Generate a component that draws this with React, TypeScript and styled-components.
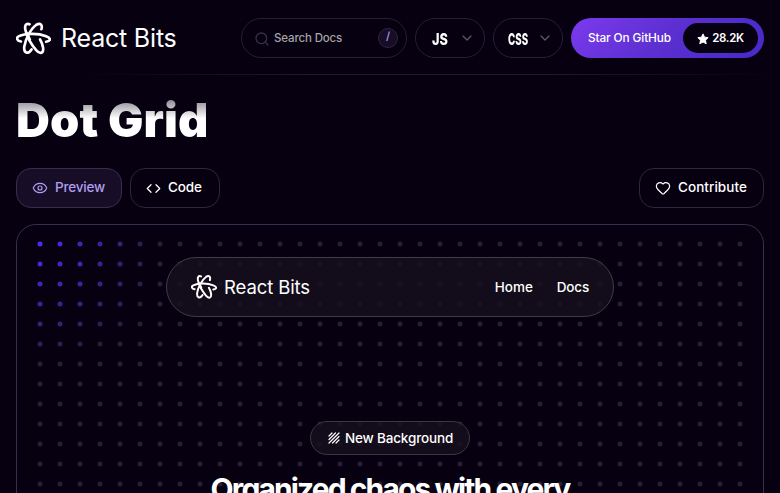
import React from "react";
import styled, { createGlobalStyle } from "styled-components";
import { ChevronDown, Code, Eye, Heart, Search } from "lucide-react";

const Global = createGlobalStyle`
  * { box-sizing: border-box; }
  html, body { margin: 0; height: 100%; overflow: hidden; background: #060010; }
  body { font-family: Inter, "Liberation Sans", sans-serif; color: #fff; }
`;

const Page = styled.div`
  height: 493px;
  overflow: hidden;
  display: flex;
  flex-direction: column;
`;

const Header = styled.header`
  height: 75px;
  flex: none;
  padding: 2px 16px 0;
  display: flex;
  align-items: center;
  gap: 8px;
  border-bottom: 1px solid;
  border-image: linear-gradient(90deg, #060010 10%, #211a2b 40%, #211a2b 70%, #060010) 1;
`;

const Label = styled.span<{ $size: number; $weight?: number; $spacing?: number; $color?: string }>`
  font-size: ${(p) => p.$size}px;
  font-weight: ${(p) => p.$weight ?? 500};
  letter-spacing: ${(p) => p.$spacing ?? 0}px;
  color: ${(p) => p.$color ?? "#fff"};
  line-height: 1.2;
  white-space: nowrap;
`;

const Brand = styled.div<{ $gap: number }>`
  display: flex;
  align-items: center;
  gap: ${(p) => p.$gap}px;
  margin-right: auto;
`;

const Pill = styled.div<{ $width: number; $pad: string }>`
  width: ${(p) => p.$width}px;
  height: 40px;
  padding: ${(p) => p.$pad};
  display: flex;
  align-items: center;
  justify-content: space-between;
  border: 1px solid #271e37;
  border-radius: 20px;
`;

const SearchText = styled.div`
  display: flex;
  align-items: center;
  gap: 4px;
  padding-top: 1px;
`;

const Key = styled.kbd`
  width: 20px;
  height: 20px;
  display: grid;
  place-items: center;
  padding-bottom: 4px;
  border: 1px solid #2f2542;
  border-radius: 50%;
  background: #170d27;
  color: #b19eef;
  font: 500 11px Inter, sans-serif;
`;

const Condensed = styled.span<{ $scale: number; $width: number }>`
  width: ${(p) => p.$width}px;
  padding-top: 1px;
  font-size: 16.5px;
  font-weight: 800;
  line-height: 20px;
  transform: scaleX(${(p) => p.$scale});
  transform-origin: left center;
`;

const StarButton = styled.button`
  width: 193px;
  height: 40px;
  padding: 0 6px 0 17px;
  display: flex;
  align-items: center;
  justify-content: space-between;
  border: 0;
  border-radius: 20px;
  background: linear-gradient(135deg, #7c3aed 0%, #5b2fd0 50%, #4729c8 100%);
  font-family: inherit;
`;

const Count = styled.span`
  width: 75px;
  height: 30px;
  padding-top: 1px;
  display: flex;
  align-items: center;
  justify-content: center;
  gap: 3px;
  border-radius: 15px;
  background: #060010;
`;

const Main = styled.main`
  padding: 16px 16px 0;
`;

const Title = styled.h1`
  margin: 0;
  height: 61px;
  font: 900 47px/57px Inter, sans-serif;
  letter-spacing: 0.1px;
  width: max-content;
  background: linear-gradient(180deg, #8c8992 14%, #fff 45%);
  background-clip: text;
  -webkit-background-clip: text;
  color: transparent;
`;

const Toolbar = styled.div`
  margin-top: 16px;
  display: flex;
  gap: 8px;
`;

const Tab = styled.button<{ $width: number; $active?: boolean; $end?: boolean }>`
  width: ${(p) => p.$width}px;
  height: 40px;
  padding: 0 0 1px 15px;
  display: flex;
  align-items: center;
  gap: 7px;
  margin-left: ${(p) => (p.$end ? "auto" : "0")};
  border: 1px solid ${(p) => (p.$active ? "#392e4e" : "#302541")};
  border-radius: 15px;
  background: ${(p) => (p.$active ? "#170d27" : "#060010")};
  color: ${(p) => (p.$active ? "#b19eef" : "#fff")};
  font-family: inherit;
  svg { margin-top: 1px; flex: none; }
`;

const Preview = styled.section`
  position: relative;
  height: 520px;
  margin-top: 16px;
  padding-top: 32px;
  display: flex;
  flex-direction: column;
  align-items: center;
  overflow: hidden;
  border: 1px solid #392e4e;
  border-radius: 20px;
`;

const DotCanvas = styled.svg`
  position: absolute;
  inset: 0;
`;

const Nav = styled.nav`
  position: relative;
  width: 448px;
  height: 60px;
  flex: none;
  padding: 0 24px;
  display: flex;
  align-items: center;
  gap: 24px;
  border: 1px solid #413b49;
  border-radius: 30px;
  background: rgba(22, 15, 29, 0.86);
`;

const Badge = styled.div`
  position: relative;
  width: 160px;
  height: 34px;
  flex: none;
  margin-top: 104px;
  padding-left: 1px;
  display: flex;
  align-items: center;
  justify-content: center;
  gap: 5px;
  border: 1px solid #3b3545;
  border-radius: 17px;
  background: rgba(22, 15, 29, 0.82);
`;

const Headline = styled.h2`
  position: relative;
  margin: 15px 0 0;
  text-align: center;
  font: 700 30px/38px Inter, sans-serif;
  letter-spacing: -1.9px;
  white-space: nowrap;
`;

const Logo = ({ width, height }: { width: number; height: number }) => (
  <svg width={width} height={height} viewBox="18 24 106 98" fill="none" stroke="#fff" strokeWidth="8" strokeLinecap="round">
    <path d="M33 82C21 80 17 71 27 66C45 57 85 56 109 66C124 72 125 80 109 83" />
    <path d="M59 30C48 25 43 34 47 49C52 69 66 93 79 108C91 122 102 118 100 101C99 93 95 83 91 76" />
    <path d="M95 45C99 31 92 24 79 32C62 44 46 76 43 98C41 118 54 122 65 106" />
    <path d="M50 56L60 76" />
  </svg>
);

const Star = () => (
  <svg width="12" height="12" viewBox="0 0 24 24" fill="#fff" stroke="#fff" strokeWidth="2" strokeLinejoin="round">
    <path d="M12 1.8l3.1 6.6 7.2.9-5.3 5 1.4 7.2L12 18l-6.4 3.5L7 14.3l-5.3-5 7.2-.9z" />
  </svg>
);

const Hatch = () => (
  <svg width="12" height="12" viewBox="0 0 12 12" stroke="#fff" strokeWidth="1.2" strokeLinecap="round">
    <path d="M1 4L4 1M1 7.5L7.5 1M1 11L11 1M4.5 11L11 4.5M8 11L11 8" />
  </svg>
);

const BASE = [39, 30, 55];
const ACTIVE = [82, 39, 255];

const Dots = () => {
  const dots: React.ReactElement[] = [];
  for (let row = 0; row < 14; row++) {
    for (let col = 0; col < 36; col++) {
      const distance = Math.hypot(col * 20 + 2, row * 20 + 2);
      const t = Math.max(0, 1 - distance / 120);
      const mix = BASE.map((c, i) => Math.round(c + (ACTIVE[i] - c) * t));
      dots.push(<circle key={`${row}-${col}`} cx={23 + col * 20} cy={19 + row * 20} r="2.5" fill={`rgb(${mix.join(",")})`} />);
    }
  }
  return <DotCanvas width="746" height="518">{dots}</DotCanvas>;
};

export default function App() {
  return (
    <Page>
      <Global />
      <Header>
        <Brand $gap={10}>
          <Logo width={35} height={33} />
          <Label $size={25} $weight={400} $spacing={-0.2}>React Bits</Label>
        </Brand>
        <Pill $width={166} $pad="0 8px 0 12px">
          <SearchText>
            <Search size={16} color="#392e4e" strokeWidth={2} />
            <Label $size={11.5} $spacing={-0.15} $color="#a6a4a8">Search Docs</Label>
          </SearchText>
          <Key>/</Key>
        </Pill>
        <Pill $width={70} $pad="0 9px 0 16px">
          <Condensed $scale={0.77} $width={20}>JS</Condensed>
          <ChevronDown size={16} color="#5d5965" strokeWidth={1.9} />
        </Pill>
        <Pill $width={70} $pad="0 9px 0 14px">
          <Condensed $scale={0.59} $width={22}>CSS</Condensed>
          <ChevronDown size={16} color="#5d5965" strokeWidth={1.9} />
        </Pill>
        <StarButton>
          <Label $size={11.8} $spacing={-0.1}>Star On GitHub</Label>
          <Count><Star /><Label $size={11.5} $weight={600} $spacing={-0.3}>28.2K</Label></Count>
        </StarButton>
      </Header>
      <Main>
        <Title>Dot Grid</Title>
        <Toolbar>
          <Tab $width={106} $active><Eye size={16} strokeWidth={1.8} /><Label $size={13.5} $spacing={-0.2} $color="#b19eef">Preview</Label></Tab>
          <Tab $width={90}><Code size={15} /><Label $size={13.5} $spacing={-0.1}>Code</Label></Tab>
          <Tab $width={125} $end><Heart size={16} strokeWidth={1.8} /><Label $size={13.5} $spacing={0.05}>Contribute</Label></Tab>
        </Toolbar>
        <Preview>
          <Dots />
          <Nav>
            <Brand $gap={7}>
              <Logo width={26} height={24} />
              <Label $size={18.5} $weight={400} $spacing={-0.1}>React Bits</Label>
            </Brand>
            <Label $size={13.5}>Home</Label>
            <Label $size={13.5} $spacing={-0.2}>Docs</Label>
          </Nav>
          <Badge><Hatch /><Label $size={13.5} $spacing={-0.15}>New Background</Label></Badge>
          <Headline>Organized chaos with every<br />cursor movement!</Headline>
        </Preview>
      </Main>
    </Page>
  );
}
